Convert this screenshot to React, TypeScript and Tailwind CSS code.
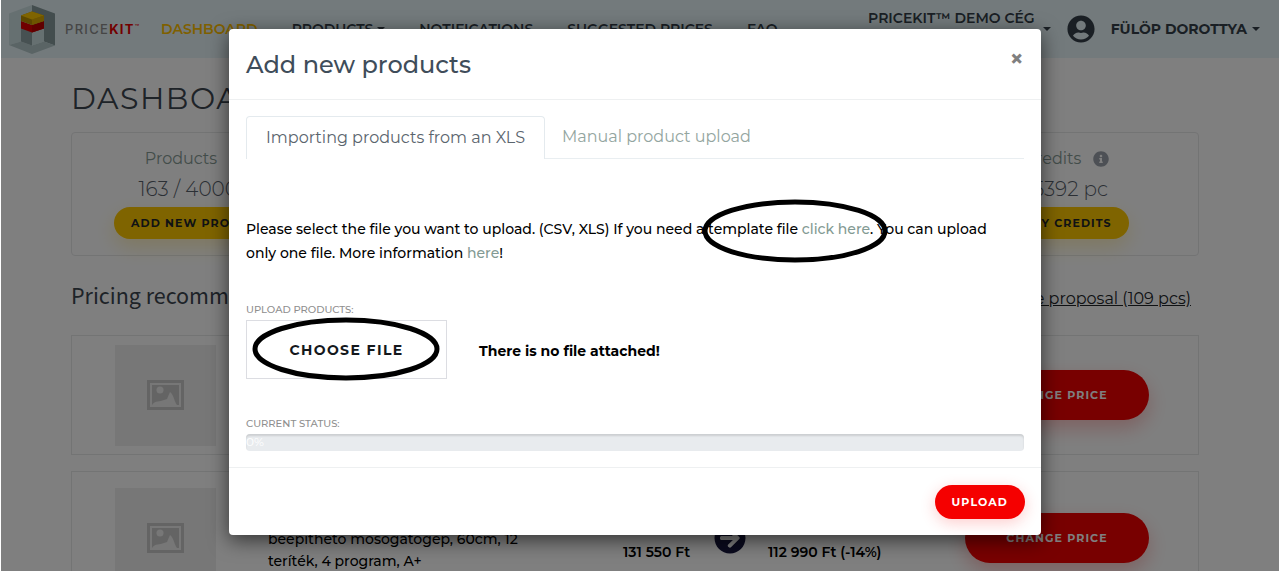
import React from 'react';
import { FaArrowCircleRight, FaInfoCircle, FaUserCircle } from 'react-icons/fa';

interface StatCardProps {
  label: string;
  value: string;
  action: string;
  className?: string;
  infoClassName?: string;
}

interface ProductRowProps {
  className?: string;
  children?: React.ReactNode;
}

const Caret = () => (
  <svg width="8" height="4" viewBox="0 0 8 4" fill="currentColor" aria-hidden="true">
    <path d="M0 0h8L4 4z" />
  </svg>
);

const Logo = () => (
  <svg width="46" height="49" viewBox="0 0 46 49" aria-hidden="true">
    <path d="M23 0 0 8.500V40L12 36.500 23 40.500 35 36.500 23 8z" fill="#cde0e2" />
    <path d="M23 0 46 8.500V40.500L35 36.500V13L23 8z" fill="#869a9c" />
    <path d="M0 40 12 36.500 23 40.500 35 36.500 46 40.500 23 49z" fill="#b4c8ca" />
    <path d="M12 22 23 27V40.500L12 36.500z" fill="#8ea2a4" />
    <path d="M23 27 35 22V36.500L23 40.500z" fill="#cde0e2" />
    <path d="M12 16 23 20 35 16V23.500L23 27.500 12 23.500z" fill="#e00000" />
    <path d="M23 20 35 16V23.500L23 27.500z" fill="#c00000" />
    <path d="M12 10.500 23 6.500 35 10.500V16L23 20 12 16z" fill="#b88f00" />
    <path d="M23 14.500 35 10.500V16L23 20z" fill="#dcab00" />
    <path d="M12 10.500 23 6.500 35 10.500 23 14.500z" fill="#ffc800" />
  </svg>
);

const PlaceholderImage = () => (
  <div className="flex size-[101px] items-center justify-center bg-[#eeeeee]">
    <svg width="37" height="30" viewBox="0 0 37 30" aria-hidden="true">
      <path fill="#c9c9c9" fillRule="evenodd" d="M0 0h37v30H0zM3 3v24h31V3z" />
      <path fill="#c9c9c9" d="M5 5h27v20H5z" />
      <circle cx="13" cy="10" r="3.500" fill="#eeeeee" />
      <path fill="#eeeeee" d="M5 25c3-5 8-3 12-5l3-1 3-7c4 3 4 9 7 13z" />
    </svg>
  </div>
);

const StatCard: React.FC<StatCardProps> = ({ label, value, action, className = '', infoClassName = '' }) => (
  <div className={`flex flex-col items-center rounded border border-[#e6e8e9] pt-3 pb-4 ${className}`}>
    <div className={`flex items-center gap-3 text-base leading-7 text-[#869a94] ${infoClassName}`}>
      {label}
      <FaInfoCircle size={16} className="text-[#9aa1aa]" />
    </div>
    <div className="text-xl leading-8 font-light text-[#56606a]">{value}</div>
    <button className="mt-[2px] h-8 rounded-full bg-[#ffc800] px-[17px] text-[11px] font-bold tracking-widest text-[#212529] uppercase shadow-[0_8px_20px_rgba(255,200,0,0.25)]">
      {action}
    </button>
  </div>
);

const ProductRow: React.FC<ProductRowProps> = ({ className = '', children }) => (
  <div className={`flex items-center border border-[#e6e8e9] pr-[49px] pl-[43px] ${className}`}>
    <PlaceholderImage />
    <div className="flex flex-1 items-center pl-[52px]">{children}</div>
    <button className="h-[50px] w-[184px] rounded-full bg-[#f00000] text-[11px] font-bold tracking-widest text-white shadow-[0_8px_20px_rgba(240,0,0,0.25)]">
      CHANGE PRICE
    </button>
  </div>
);

const Navbar = () => (
  <nav className="flex h-[58px] items-center bg-[#e6f4f8] pr-[19px] pl-2 text-sm font-semibold text-[#343f49]">
    <a href="#" className="flex w-[152px] items-center gap-[10px]">
      <Logo />
      <span className="font-['Inter',sans-serif] text-[13px] font-medium tracking-widest whitespace-nowrap text-[#8c8c8c]">
        PRICE<b className="text-[#e60000]">KIT</b>
        <sup className="text-[7px] tracking-normal text-[#e60000]">™</sup>
      </span>
    </a>
    <div className="flex flex-1 items-center gap-[34px] whitespace-nowrap">
      <a href="#" className="text-[#ffc000]">DASHBOARD</a>
      <a href="#" className="flex items-center gap-1">PRODUCTS <Caret /></a>
      <a href="#">NOTIFICATIONS</a>
      <a href="#">SUGGESTED PRICES</a>
      <a href="#">FAQ</a>
    </div>
    <button className="flex items-center gap-2">
      <span className="pb-[22px] whitespace-nowrap">PRICEKIT™ DEMO CÉG</span>
      <Caret />
    </button>
    <button className="ml-4 flex items-center font-bold whitespace-nowrap">
      <FaUserCircle size={28} className="mr-4" />
      FÜLÖP DOROTTYA
      <span className="ml-[5px]"><Caret /></span>
    </button>
  </nav>
);

const Dashboard = () => (
  <main className="mx-auto w-full max-w-[1128px]">
    <h1 className="pt-[21px] text-[30px] leading-10 tracking-wider text-[#3c4650]">DASHBOARD</h1>
    <div className="mt-[13px] grid grid-cols-4 gap-6">
      <StatCard label="Products" value="163 / 4000 pc" action="Add new products" infoClassName="pr-4" />
      <StatCard label="Credits" value="15392 pc" action="Buy credits" className="col-start-4" />
    </div>
    <div className="mt-[21px] mb-[18px] flex items-center justify-between pr-2">
      <h2 className="font-['Source_Sans_Pro','Source_Sans_3','Noto_Sans_CJK_SC',sans-serif] text-2xl leading-10 text-[#3c4650]">
        Pricing recommendations
      </h2>
      <a href="#" className="pt-1 text-base text-[#212529] underline">Price proposal (109 pcs)</a>
    </div>
    <ProductRow className="h-[120px]" />
    <ProductRow className="mt-4 h-[134px]">
      <p className="w-[355px] pt-6 pr-20 text-sm leading-[22px] font-medium text-black">
        beépíthető mosogatógép, 60cm, 12 teríték, 4 program, A+
      </p>
      <span className="w-[91px] pt-7 text-sm font-semibold text-black">131 550 Ft</span>
      <FaArrowCircleRight size={32} className="text-[#14143c]" />
      <span className="pt-7 pl-[22px] text-sm font-semibold text-black">112 990 Ft (-14%)</span>
    </ProductRow>
  </main>
);

const UploadDialog = () => (
  <div
    role="dialog"
    aria-labelledby="dialog-title"
    className="w-full max-w-[812px] self-start rounded bg-white text-black shadow-[0_5px_20px_rgba(0,0,0,0.6)]"
  >
    <header className="flex items-start justify-between border-b border-[#eef0f1] px-[17px] pt-[18px] pb-4">
      <h2 id="dialog-title" className="text-2xl leading-9 font-medium text-[#3f4d5a]">Add new products</h2>
      <button aria-label="Close" className="text-2xl leading-6 font-bold text-[#808080]">×</button>
    </header>

    <div className="px-[17px] pt-4 pb-4">
      <div role="tablist" className="flex border-b border-[#e9eef1] text-base">
        <button
          role="tab"
          aria-selected="true"
          className="-mb-px h-[43px] rounded-t border border-b-0 border-[#e4eaee] bg-white px-[19px] text-[#5a646d]"
        >
          Importing products from an XLS
        </button>
        <button role="tab" aria-selected="false" className="h-[42px] px-[17px] text-[#93a5a0]">
          Manual product upload
        </button>
      </div>

      <p className="relative mt-[58px] pr-5 text-sm leading-6 font-medium">
        Please select the file you want to upload. (CSV, XLS) If you need a template file{' '}
        <a href="#" className="text-[#839a93]">click here</a>. You can upload only one file. More information{' '}
        <a href="#" className="text-[#839a93]">here</a>!
        <svg className="absolute -top-[18px] left-[456px]" width="187" height="65" viewBox="0 0 187 65">
          <ellipse cx="93" cy="32" rx="90" ry="29" fill="none" stroke="#000" strokeWidth="5" />
        </svg>
      </p>

      <div className="mt-[37px] text-[10px] leading-4 font-medium text-[#8e8e8e]">UPLOAD PRODUCTS:</div>
      <div className="mt-[2px] flex items-center gap-8">
        <label className="relative flex h-[59px] w-[201px] cursor-pointer items-center justify-center border border-[#dcdde2] text-sm font-bold tracking-widest text-[#14181c]">
          CHOOSE FILE
          <input type="file" className="sr-only" />
          <svg className="absolute -top-1 left-[5px]" width="188" height="65" viewBox="0 0 188 65">
            <ellipse cx="94" cy="32" rx="91" ry="29" fill="none" stroke="#000" strokeWidth="5" />
          </svg>
        </label>
        <span className="pt-[2px] text-sm font-bold">There is no file attached!</span>
      </div>

      <div className="mt-[37px] text-[10px] leading-4 font-medium text-[#8e8e8e]">CURRENT STATUS:</div>
      <div
        role="progressbar"
        aria-valuenow={0}
        className="mt-[2px] h-[17px] rounded bg-[#e8ebee] text-xs leading-4 text-white shadow-[inset_0_2px_2px_rgba(0,0,0,0.12)]"
      >
        0%
      </div>
    </div>

    <footer className="flex justify-end border-t border-[#eef0f1] px-4 pt-[17px] pb-4">
      <button className="h-[34px] rounded-full bg-[#f50000] px-[17px] text-[11px] font-bold tracking-widest text-white shadow-[0_4px_16px_rgba(245,0,0,0.2)]">
        UPLOAD
      </button>
    </footer>
  </div>
);

const App: React.FC = () => {
  return (
    <div className="relative h-screen overflow-hidden bg-white px-px font-['Montserrat','Inter',sans-serif]">
      <Navbar />
      <div className="pr-[10px]">
        <Dashboard />
      </div>
      <div className="absolute inset-x-px inset-y-0 flex justify-center bg-black/50 pt-[29px] pr-[10px]">
        <UploadDialog />
      </div>
    </div>
  );
};

export default App;
